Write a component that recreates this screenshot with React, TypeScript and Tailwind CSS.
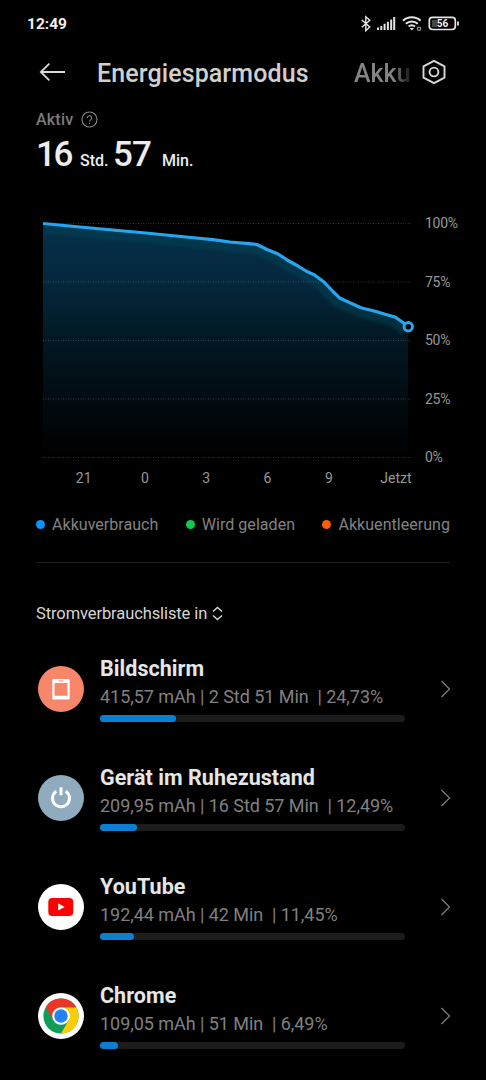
import type { ReactNode } from 'react'

interface Consumer {
  name: string
  usage: string
  percent: number
  icon: ReactNode
}

const ScreenIcon = () => (
  <svg viewBox="0 0 46 46" className="h-[46px] w-[46px]">
    <circle cx="23" cy="23" r="23" fill="#f8866a" />
    <path
      fillRule="evenodd"
      fill="#fff"
      d="M15.3 13h15.4a1 1 0 0 1 1 1v18.500a1 1 0 0 1-1 1H15.300a1 1 0 0 1-1-1V14a1 1 0 0 1 1-1ZM16.500 17v12.800h13V17ZM20.500 14.400v1.200h5v-1.200Z"
    />
  </svg>
)

const PowerIcon = () => (
  <svg viewBox="0 0 46 46" className="h-[46px] w-[46px]">
    <circle cx="23" cy="23" r="23" fill="#8fabbd" />
    <path d="M18.3 16.2A8.5 8.5 0 1 0 27.7 16.2" fill="none" stroke="#fff" strokeWidth="3" />
    <path d="M23 12.2v8" stroke="#fff" strokeWidth="3" />
  </svg>
)

const YouTubeIcon = () => (
  <svg viewBox="0 0 46 46" className="h-[46px] w-[46px]">
    <circle cx="23" cy="23" r="23" fill="#fff" />
    <rect x="10.3" y="14" width="25" height="18" rx="4" fill="#f00" />
    <path d="M20.2 19.2v7.400l6.300-3.700Z" fill="#fff" />
  </svg>
)

const ChromeIcon = () => (
  <svg viewBox="0 0 46 46" className="h-[46px] w-[46px]">
    <circle cx="23" cy="23" r="23" fill="#fff" />
    <circle cx="23" cy="23" r="17.6" fill="#109d58" />
    <path d="M23 14.200H38.240A17.600 17.600 0 0 1 23 40.600L30.620 27.400Z" fill="#fecd08" />
    <path d="M7.760 14.200A17.600 17.600 0 0 1 38.240 14.200H23L15.380 27.400Z" fill="#ea3529" />
    <circle cx="23" cy="23" r="8.8" fill="#fff" />
    <circle cx="23" cy="23" r="6.7" fill="#2481f8" />
  </svg>
)

const consumers: Consumer[] = [
  { name: 'Bildschirm', usage: '415,57 mAh | 2 Std 51 Min  | 24,73%', percent: 24.9, icon: <ScreenIcon /> },
  { name: 'Gerät im Ruhezustand', usage: '209,95 mAh | 16 Std 57 Min  | 12,49%', percent: 12.1, icon: <PowerIcon /> },
  { name: 'YouTube', usage: '192,44 mAh | 42 Min  | 11,45%', percent: 11.1, icon: <YouTubeIcon /> },
  { name: 'Chrome', usage: '109,05 mAh | 51 Min  | 6,49%', percent: 6, icon: <ChromeIcon /> },
]

const hours = ['21', '0', '3', '6', '9']
const levels = ['100%', '75%', '50%', '25%', '0%']
const gridLines = [13.5, 72, 130.5, 189, 247.5]

const curve =
  '7,13.5 60,18.5 110,23 150,27 177,29.7 194,32 213,33.7 221,34.5 231,39.5 242,44 252,50.5 262,56 270,61 278.5,65 288,72 297,81.5 304,88.3 325,97.7 340,101.5 350,104.5 359,107 367,112.5 372,116.5'

function StatusBar() {
  return (
    <div className="flex h-[46px] items-center justify-between pt-[2px] pr-[26px] pl-[27px]">
      <span className="pt-[2px] text-[15.5px] font-bold text-[#eee]">12:49</span>
      <svg width="100" height="18" viewBox="0 0 100 18" fill="none" stroke="#e4e4e4">
        {/* Bluetooth */}
        <path d="M1.8 5l8 7-4 3.600V1.800l4 3.400-8 7" strokeWidth="1.4" />
        {/* Mobile signal */}
        <path
          d="M18 12.500v2.500M21.300 11v4M24.600 8.800v6.200M27.900 6.700v8.300M31.200 4.500v10.500M34.200 2v13"
          strokeWidth="2"
        />
        {/* Wifi */}
        <path d="M43 5.800a13 13 0 0 1 17.600 0M45.800 8.700a9 9 0 0 1 12 0M48.600 11.500a5 5 0 0 1 6.400 0" strokeWidth="2" />
        <path d="M49.600 13h4.400l-2.200 2.500Z" fill="#e4e4e4" stroke="none" />
        <circle cx="59" cy="13.800" r="1.700" strokeWidth="1.100" stroke="#999" />
        {/* Battery */}
        <rect x="69.300" y="2.300" width="26" height="12.200" rx="3.200" strokeWidth="1.700" />
        <rect x="72" y="5" width="5" height="7" fill="#444" stroke="none" />
        <path d="M98 6.500v4" strokeWidth="1.800" />
        <text
          x="82.500"
          y="12"
          fontSize="10"
          fontWeight="700"
          textAnchor="middle"
          fill="#eee"
          stroke="none"
        >
          56
        </text>
      </svg>
    </div>
  )
}

function Header() {
  return (
    <div className="flex h-[52px] items-center px-[39px] whitespace-nowrap">
      <svg width="28" height="20" viewBox="0 0 28 20" fill="none" stroke="#d8d8d8" strokeWidth="1.8">
        <path d="M26 10H2M10.300 1.700L1.800 10l8.500 8.300" />
      </svg>
      <h1 className="ml-[30px] w-[257px] pt-[3px] text-[25px] font-medium tracking-[0.1px] text-[#cfcfcf]">
        Energiesparmodus
      </h1>
      <span className="w-[57px] overflow-hidden bg-linear-to-r from-[#848484] from-70% to-[#181818] bg-clip-text pt-[3px] text-[25px] font-medium text-transparent">
        Akku
      </span>
      <svg
        className="ml-auto shrink-0"
        width="26"
        height="26"
        viewBox="0 0 26 26"
        fill="none"
        stroke="#d8d8d8"
        strokeWidth="1.9"
        strokeLinejoin="round"
      >
        <path d="M13 1.800l10.500 5.600v11.200L13 24.200 2.500 18.600V7.400Z" />
        <circle cx="13" cy="13" r="4.4" />
      </svg>
    </div>
  )
}

function BatteryChart() {
  return (
    <div className="mt-[38px]">
      <div className="flex">
        <svg width="376" height="254" viewBox="0 0 376 254" className="block shrink-0 overflow-visible">
          <defs>
            <linearGradient id="fill" x1="0" y1="13" x2="0" y2="247" gradientUnits="userSpaceOnUse">
              <stop offset="0" stopColor="#04304a" />
              <stop offset="0.25" stopColor="#04273d" />
              <stop offset="0.5" stopColor="#021823" />
              <stop offset="0.75" stopColor="#010b11" />
              <stop offset="1" stopColor="#000" />
            </linearGradient>
            <clipPath id="area">
              <polygon points={`${curve} 372,247 7,247`} />
            </clipPath>
            <filter id="soft">
              <feGaussianBlur stdDeviation="1.5" />
            </filter>
          </defs>
          <g clipPath="url(#area)">
            <rect x="7" y="13" width="366" height="235" fill="url(#fill)" />
            <polyline
              points={curve}
              fill="none"
              stroke="#0c4556"
              strokeOpacity="0.45"
              strokeWidth="20"
              filter="url(#soft)"
            />
          </g>
          {gridLines.map((y) => (
            <path key={y} d={`M7 ${y}H375`} stroke="#fff" strokeOpacity="0.2" strokeDasharray="1 1.5" />
          ))}
          <polyline points={curve} fill="none" stroke="#27a6f0" strokeWidth="3.2" strokeLinejoin="round" />
          <circle cx="372.3" cy="116.7" r="4.2" fill="#000" stroke="#27a6f0" strokeWidth="3" />
        </svg>
        <div className="ml-[13px] flex h-[257px] flex-col justify-between pt-[3px] text-[14px] leading-[20px] tracking-[-0.3px] text-[#979797]">
          {levels.map((level) => (
            <span key={level}>{level}</span>
          ))}
        </div>
      </div>
      <div className="mt-px flex w-[375.5px] pl-[17px] text-[14px] leading-[20px] text-[#979797]">
        {hours.map((hour) => (
          <span key={hour} className="w-[61.3px] text-center">
            {hour}
          </span>
        ))}
        <span className="ml-auto">Jetzt</span>
      </div>
    </div>
  )
}

function Legend() {
  return (
    <div className="mt-[25px] flex h-[24px] items-center justify-between text-[16px] tracking-[0.04px] whitespace-nowrap text-[#828282]">
      <div className="flex items-center gap-[7px]">
        <i className="-mt-[2px] size-[9px] rounded-full bg-[#0d93f8]" />
        Akkuverbrauch
      </div>
      <div className="flex items-center gap-[7px]">
        <i className="-mt-[2px] size-[9px] rounded-full bg-[#0dcb4c]" />
        Wird geladen
      </div>
      <div className="flex items-center gap-[7px]">
        <i className="-mt-[2px] size-[9px] rounded-full bg-[#fc5b0b]" />
        Akkuentleerung
      </div>
    </div>
  )
}

function ConsumerRow({ name, usage, percent, icon }: Consumer) {
  return (
    <div className="flex h-[109px] items-center pl-[2px]">
      <div className="shrink-0">{icon}</div>
      <div className="ml-4 w-[305px] whitespace-pre">
        <p className="text-[21.5px] leading-[28px] font-bold tracking-[0.05px] text-[#e6e6e6]">{name}</p>
        <p className="text-[18px] leading-[28px] tracking-[-0.05px] text-[#808080]">{usage}</p>
        <div className="mt-[4px] h-[7px] rounded-full bg-[#1c1c1c]">
          <div className="h-full rounded-full bg-[#0b7fd2]" style={{ width: `${percent}%` }} />
        </div>
      </div>
      <svg className="-mr-px ml-auto" width="11" height="18" viewBox="0 0 11 18" fill="none" stroke="#7c7c7c" strokeWidth="1.3">
        <path d="M1.5 1l8 8-8 8" />
      </svg>
    </div>
  )
}

export default function App() {
  return (
    <div className="h-[1080px] w-[486px] overflow-hidden bg-black font-[Roboto,sans-serif]">
      <StatusBar />
      <Header />
      <main className="px-[36px]">
        <div className="flex h-[40px] items-center pt-[2px] text-[16px] font-medium text-[#7b7b7b]">
          <span className="pt-[2px] tracking-[0.2px]">Aktiv</span>
          <svg
            className="ml-[8px]"
            width="17"
            height="17"
            viewBox="0 0 17 17"
            fill="none"
            stroke="#8a8a8a"
            strokeWidth="1.1"
          >
            <circle cx="8.5" cy="8.5" r="7.5" />
            <path d="M6.300 7a2.200 2.200 0 1 1 3.300 1.900c-.8.500-1.100.8-1.100 1.600M8.500 11.700v1.200" />
          </svg>
        </div>
        <div className="flex h-[34px] items-baseline leading-[34px] font-medium text-[#ececec]">
          <span className="w-[44px] text-[35px] tracking-[-2.5px]">16</span>
          <span className="w-[33px] text-[16px]">Std.</span>
          <span className="w-[49px] text-[35px] tracking-[-1px]">57</span>
          <span className="text-[16px]">Min.</span>
        </div>
        <BatteryChart />
        <Legend />
        <div className="mt-[25px] h-px bg-[#202020]" />
        <div className="mt-[39px] flex h-[24px] items-center text-[16.5px] tracking-[-0.1px] text-[#d6d6d6]">
          Stromverbrauchsliste in
          <svg className="-mt-[2px] ml-[5px]" width="11" height="15" viewBox="0 0 11 15" fill="none" stroke="#d6d6d6" strokeWidth="1.5">
            <path d="M1 5.500l4.500-4 4.500 4M1 9.500l4.500 4 4.500-4" />
          </svg>
        </div>
        <div className="mt-[8px]">
          {consumers.map((consumer) => (
            <ConsumerRow key={consumer.name} {...consumer} />
          ))}
        </div>
      </main>
    </div>
  )
}
